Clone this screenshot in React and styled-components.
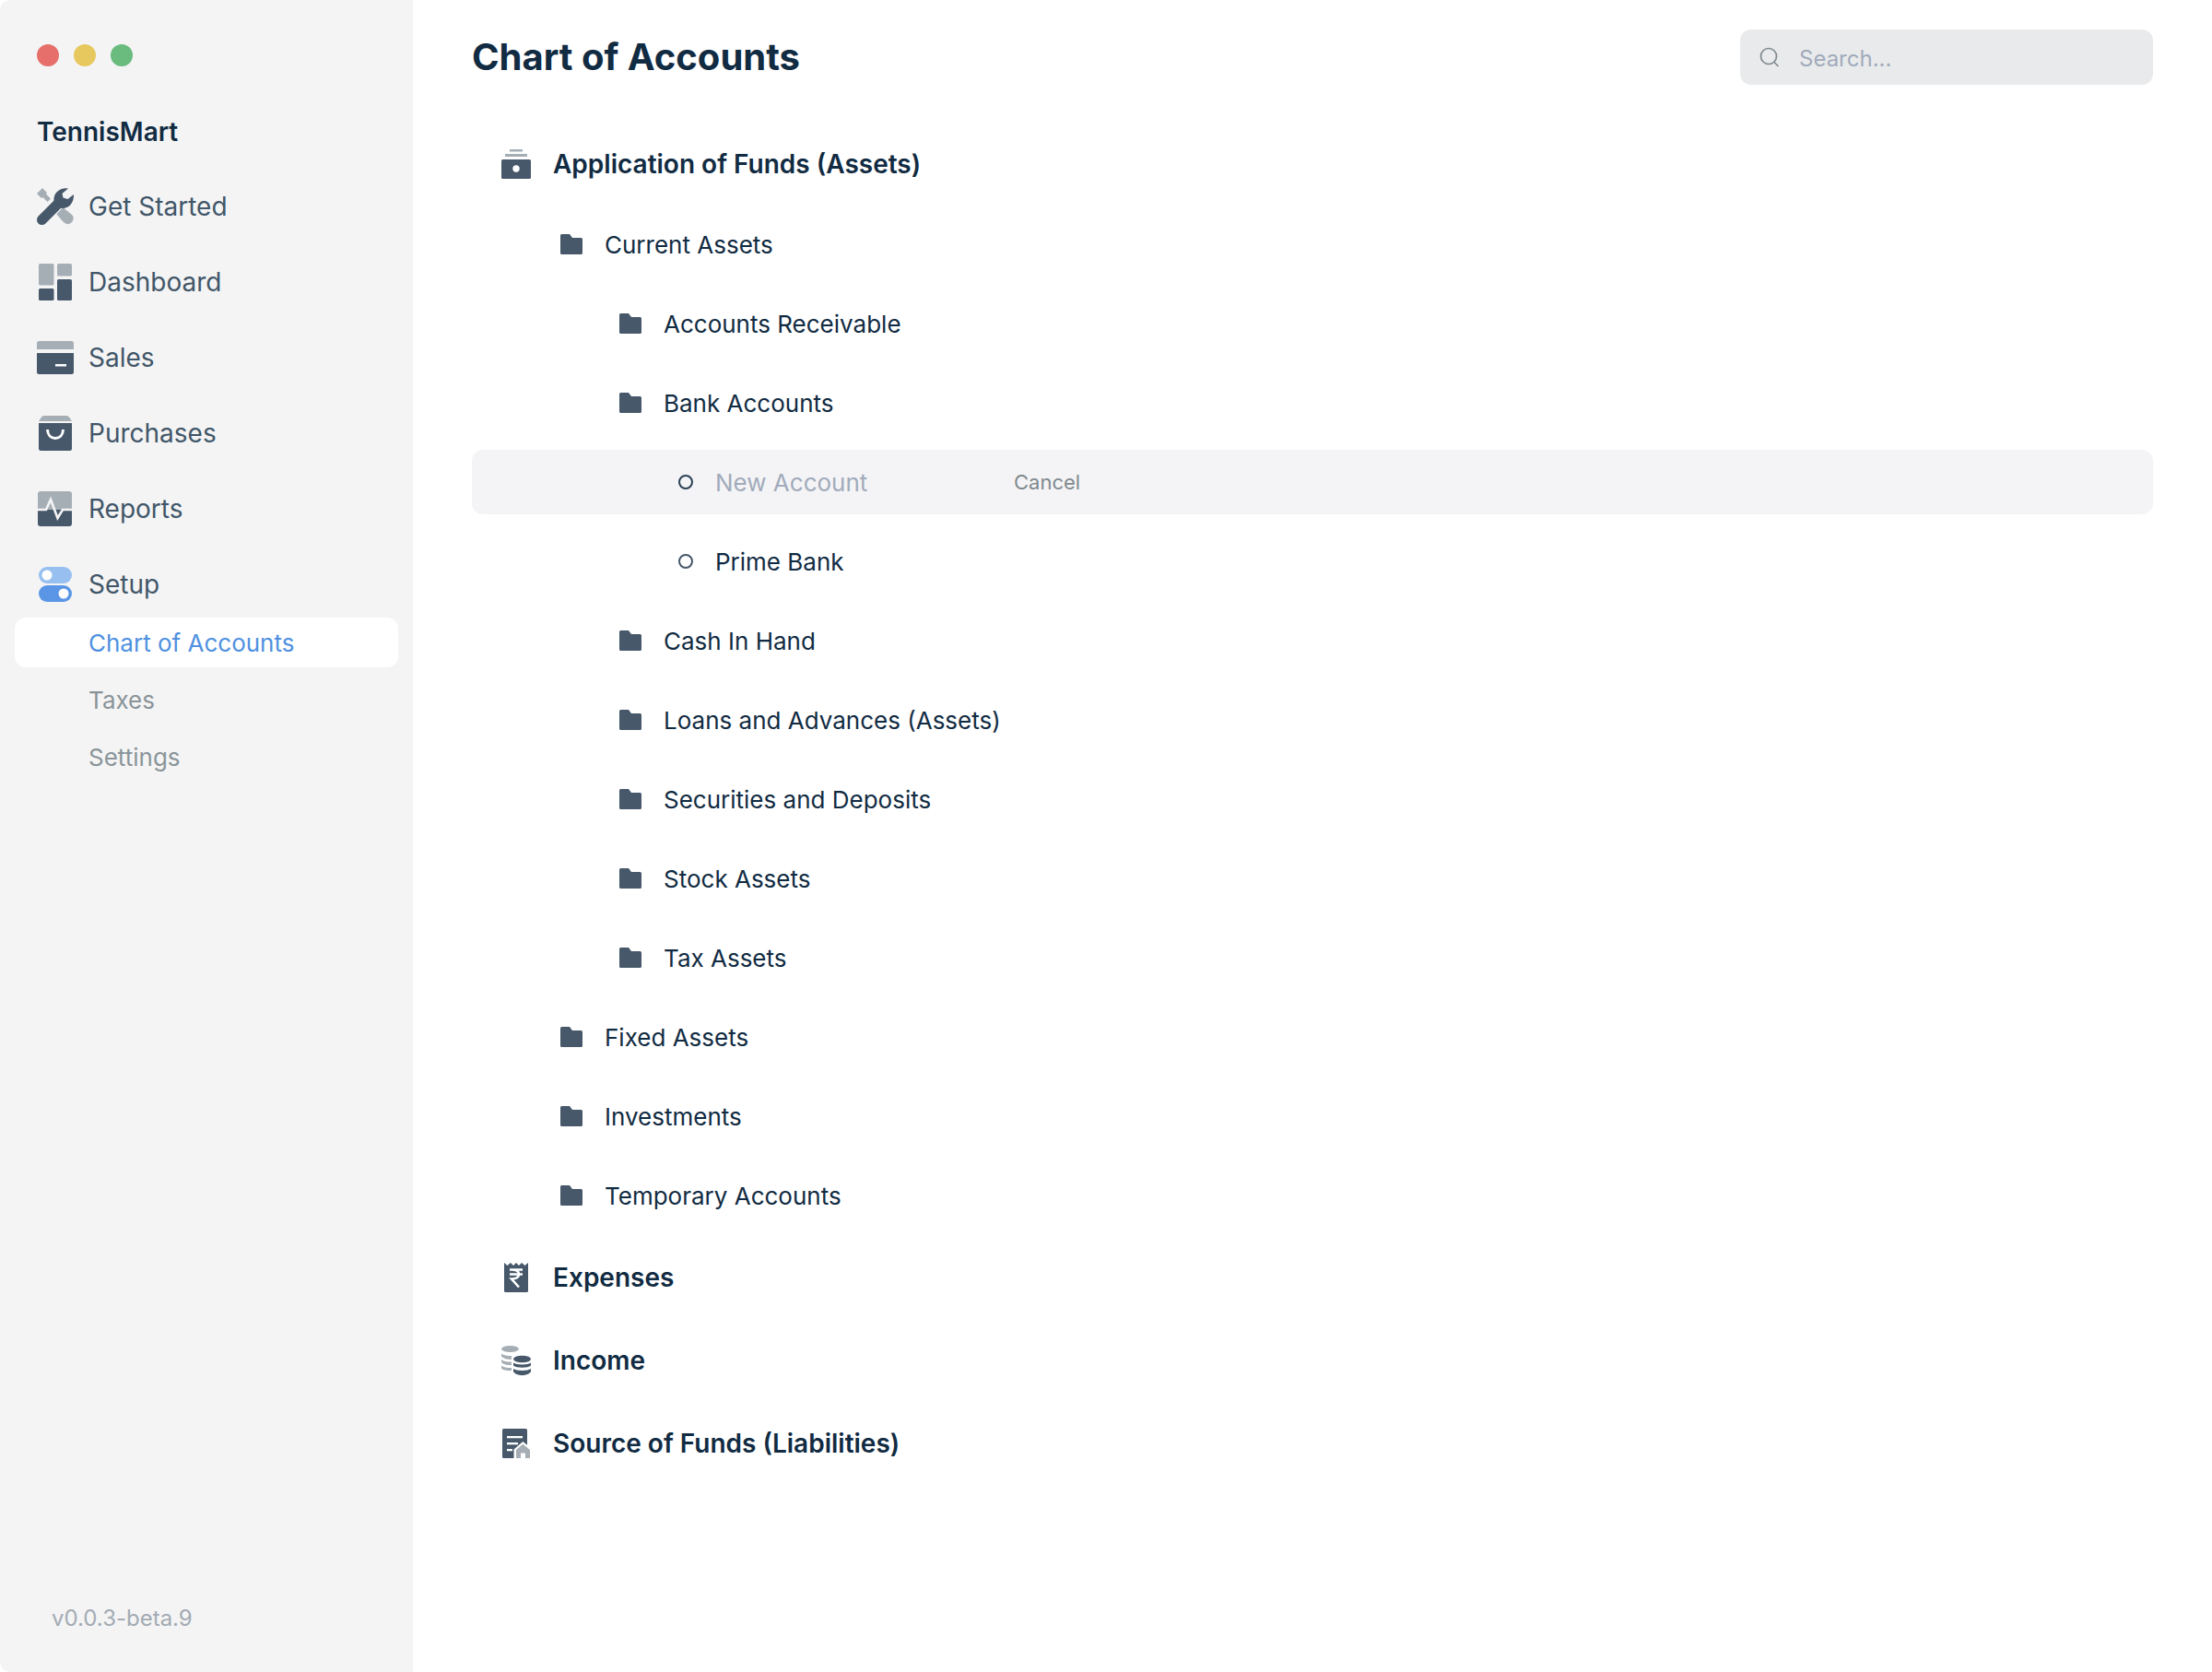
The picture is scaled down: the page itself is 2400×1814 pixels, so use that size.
import React from 'react';
import styled, { createGlobalStyle } from 'styled-components';

const Global = createGlobalStyle`
  html, body { margin: 0; padding: 0; background: #fff; }
  body { font-family: Inter, "Liberation Sans", sans-serif; -webkit-font-smoothing: antialiased; }
  * { box-sizing: border-box; }
`;

const DARK = '#46586a';
const LIGHT = '#a6aeb5';

const Shell = styled.div`
  display: flex;
  width: 2400px;
  height: 1814px;
  overflow: hidden;
  background: #fff;
`;
const Sidebar = styled.aside`
  display: flex;
  flex-direction: column;
  flex: 0 0 448px;
  height: 100%;
  padding: 48px 16px 40px;
  background: #f4f4f5;
  border-top-left-radius: 12px;
  border-bottom-left-radius: 12px;
`;
const Lights = styled.div`
  display: flex;
  gap: 16px;
  padding-left: 24px;
`;
const Light = styled.span`
  width: 24px;
  height: 24px;
  border-radius: 50%;
  background: ${p => p.$c};
`;
const Brand = styled.div`
  margin-top: 43px;
  padding-left: 24px;
  font-size: 28px;
  line-height: 56px;
  font-weight: 600;
  color: #112b42;
`;
const Nav = styled.nav`
  display: flex;
  flex-direction: column;
  gap: 22px;
  margin-top: 23px;
`;
const NavItem = styled.div`
  display: flex;
  align-items: center;
  gap: 16px;
  height: 60px;
  padding-left: 24px;
  font-size: 28px;
  color: #415668;
`;
const SubList = styled.div`
  display: flex;
  flex-direction: column;
  gap: 8px;
  margin-top: -16px;
`;
const SubItem = styled.div`
  display: flex;
  align-items: center;
  height: 54px;
  padding-left: 80px;
  border-radius: 12px;
  font-size: 26px;
  color: ${p => (p.$active ? '#4f91e0' : '#8a9499')};
  background: ${p => (p.$active ? '#fff' : 'transparent')};
`;
const Version = styled.div`
  margin-top: auto;
  padding-left: 40px;
  font-size: 24px;
  line-height: 36px;
  color: #a3abb3;
`;
const Main = styled.main`
  flex: 1;
  min-width: 0;
  padding: 32px 64px 0;
`;
const Header = styled.header`
  display: flex;
  align-items: center;
  justify-content: space-between;
  height: 60px;
`;
const Title = styled.h1`
  margin: 0;
  font-size: 40px;
  line-height: 60px;
  font-weight: 700;
  color: #112b42;
`;
const Search = styled.div`
  display: flex;
  align-items: center;
  gap: 21px;
  width: 448px;
  height: 60px;
  padding-left: 21px;
  border-radius: 12px;
  background: #e9eaec;
  font-size: 24px;
  color: #a1abbb;
`;
const SearchText = styled.span`
  padding-top: 3px;
`;
const Tree = styled.div`
  display: flex;
  flex-direction: column;
  gap: 16px;
  margin-top: 49px;
`;
const Children = styled.div`
  display: flex;
  flex-direction: column;
  gap: 16px;
  margin: -1px 0 1px;
`;
const Row = styled.div`
  display: flex;
  align-items: center;
  gap: ${p => p.$gap}px;
  height: ${p => (p.$top ? 74 : 70)}px;
  padding-left: ${p => p.$pad}px;
  border-radius: 12px;
  font-size: ${p => (p.$top ? 28 : 26)}px;
  font-weight: ${p => (p.$top ? 600 : 400)};
  color: #112b42;
  background: ${p => (p.$edit ? '#f4f4f6' : 'transparent')};
`;
const Placeholder = styled.span`
  flex: 0 0 300px;
  color: #a1abbb;
`;
const Cancel = styled.span`
  font-size: 22px;
  color: #7f8a8e;
`;
const Svg = styled.svg`
  display: block;
  flex: none;
`;

const Icon40 = ({ children }) => <Svg width="40" height="40" viewBox="0 0 40 40">{children}</Svg>;

const Wrench = () => (
  <Icon40>
    <path d="M0 6 6 0 11 5 10 6.500 15 11.500 11.500 15 6.500 10 5 11Z" fill={LIGHT} />
    <path d="M25 18.500 18.500 25 27.500 35.500C30 38.500 33.500 40.500 37 38 40.500 35 40.500 31 37.500 28.500Z" fill={LIGHT} />
    <path d="M5.500 34.500 23 17" fill="none" stroke="#f4f4f5" strokeWidth="13.500" strokeLinecap="round" />
    <path d="M5.500 34.500 23 17" fill="none" stroke={DARK} strokeWidth="11" strokeLinecap="round" />
    <path d="M34 .5C27 -1 19.500 3.500 18.500 11c-.2 1.500 0 3 .4 4.500l6 6c1.300.4 2.900.6 4.600.4 6.500-.7 11-7 10.400-15L33.500 12l-5-1.500L27.500 6Z" fill={DARK} />
  </Icon40>
);
const Dash = () => (
  <Icon40>
    <rect x="2" y="0" width="16.500" height="23.500" rx="1.500" fill={LIGHT} />
    <rect x="22" y="0" width="16" height="13.500" rx="1.500" fill={LIGHT} />
    <rect x="2" y="27" width="16.500" height="13" rx="1.500" fill={DARK} />
    <rect x="22" y="17" width="16" height="23" rx="1.500" fill={DARK} />
  </Icon40>
);
const Sales = () => (
  <Icon40>
    <path d="M0 11V4.500A2.500 2.500 0 0 1 2.500 2h35A2.500 2.500 0 0 1 40 4.500V11Z" fill={LIGHT} />
    <path d="M0 15h40v20.500a2.500 2.500 0 0 1-2.500 2.500H2.500A2.500 2.500 0 0 1 0 35.500Z" fill={DARK} />
    <rect x="20" y="27" width="12" height="2.500" fill="#fff" />
  </Icon40>
);
const Bag = () => (
  <Icon40>
    <path d="M2 7 4.500 3.200C5.500 1.800 6.500 1 8 1h24c1.500 0 2.500.8 3.500 2.200L38 7Z" fill={LIGHT} />
    <path d="M2 9h36v27.500a2.500 2.500 0 0 1-2.500 2.500h-31A2.500 2.500 0 0 1 2 36.500Z" fill={DARK} />
    <path d="M11.500 16c.2 6 3.800 9.500 8.500 9.500s8.300-3.500 8.500-9.500" fill="none" stroke="#fff" strokeWidth="3" />
  </Icon40>
);
const Pulse = () => (
  <Icon40>
    <path d="M1 21V4a3 3 0 0 1 3-3h31a3 3 0 0 1 3 3v17Z" fill={LIGHT} />
    <path d="M1 21h37v15a3 3 0 0 1-3 3H4a3 3 0 0 1-3-3Z" fill={DARK} />
    <path d="M1 21H10L15 10 22.500 30 28 21H38" fill="none" stroke="#f4f4f5" strokeWidth="2.600" />
  </Icon40>
);
const Toggle = () => (
  <Icon40>
    <rect x="2" y="1" width="36" height="18" rx="9" fill="#97c0f0" />
    <circle cx="11" cy="10" r="5.500" fill="#fff" />
    <rect x="2" y="21" width="36" height="18" rx="9" fill="#5b96e6" />
    <circle cx="29" cy="30" r="5.500" fill="#fff" />
  </Icon40>
);
const Funds = () => (
  <Icon40>
    <rect x="13" y="4" width="14" height="2.500" fill={LIGHT} />
    <rect x="8" y="9" width="24" height="3" fill={LIGHT} />
    <rect x="4" y="15" width="32" height="21" rx="1.500" fill={DARK} />
    <circle cx="20" cy="25" r="3.700" fill="#fff" />
  </Icon40>
);
const Receipt = () => (
  <Icon40>
    <path d="M7 4 10.500 7 14 4 17 7 20 4 23 7 26 4 29.500 7 33 4V34.500A1.500 1.500 0 0 1 31.500 36H8.500A1.500 1.500 0 0 1 7 34.500Z" fill={DARK} />
    <path d="M13 11.500H27M13 16.500H27M15 11.500C20 11.500 23 12.500 23 16.300 23 20 20 21.500 15 21.500L23 30.500" fill="none" stroke="#fff" strokeWidth="2.600" />
  </Icon40>
);
const Coins = () => (
  <Icon40>
    <ellipse cx="13.500" cy="7.500" rx="9.500" ry="3.500" fill={LIGHT} />
    <path d="M4 12.500C6 14.500 10 15 15 15V19C10 19 6 18 4 15.500ZM4 19C6 21 10 21.500 15 21.500V25C10 25 6 24.500 4 22ZM4 25.500C6 27.500 10 28 15 28V31C10 31 5.500 30.500 4 28.500Z" fill={LIGHT} />
    <ellipse cx="26.500" cy="18.500" rx="9.500" ry="3.800" fill={DARK} />
    <path d="M17 22.500C20 25 33 25 36 22.500V25.500C33 28.500 20 28.500 17 25.500ZM17 29C20 31.500 33 31.500 36 29V32C33 37.500 20 37.500 17 32Z" fill={DARK} />
  </Icon40>
);
const Doc = () => (
  <Icon40>
    <rect x="5" y="4" width="27" height="32" rx="1.500" fill={DARK} />
    <rect x="10" y="12" width="17" height="2.300" fill="#fff" />
    <rect x="10" y="19" width="12" height="2.300" fill="#fff" />
    <rect x="10" y="26" width="6" height="2.300" fill="#fff" />
    <path d="M27.300 18 38 26.500V38H17.500V26.500Z" fill="#fff" />
    <path d="M27.300 20.700 35 27V36H30V30.500H25V36H20V27Z" fill={LIGHT} />
  </Icon40>
);
const Folder = () => (
  <Svg width="24" height="22" viewBox="0 0 24 22">
    <path d="M0 1.500A1.500 1.500 0 0 1 1.500 0H10L13 4H22.500A1.500 1.500 0 0 1 24 5.500V20.500A1.500 1.500 0 0 1 22.500 22H1.500A1.500 1.500 0 0 1 0 20.500Z" fill={DARK} />
  </Svg>
);
const Ring = ({ c }) => (
  <Svg width="16" height="16" viewBox="0 0 16 16">
    <circle cx="8" cy="8" r="7" fill="none" stroke={c} strokeWidth="2" />
  </Svg>
);
const Glass = () => (
  <Svg width="22" height="22" viewBox="0 0 22 22">
    <circle cx="10" cy="10" r="8.500" fill="none" stroke="#7f8a8e" strokeWidth="1.700" />
    <path d="M16 16.500 20.500 21" fill="none" stroke="#7f8a8e" strokeWidth="1.700" />
  </Svg>
);

const nav = [
  ['Get Started', Wrench],
  ['Dashboard', Dash],
  ['Sales', Sales],
  ['Purchases', Bag],
  ['Reports', Pulse],
  ['Setup', Toggle],
];

const Top = ({ icon: I, label }) => <Row $top $pad={28} $gap={20}><I />{label}</Row>;
const Fold = ({ level, label }) => <Row $pad={level === 1 ? 96 : 160} $gap={24}><Folder />{label}</Row>;

export default function App() {
  return (
    <Shell>
      <Global />
      <Sidebar>
        <Lights>
          <Light $c="#e76f6b" />
          <Light $c="#e7c85e" />
          <Light $c="#69bb7e" />
        </Lights>
        <Brand>TennisMart</Brand>
        <Nav>
          {nav.map(([label, I]) => <NavItem key={label}><I />{label}</NavItem>)}
          <SubList>
            <SubItem $active>Chart of Accounts</SubItem>
            <SubItem>Taxes</SubItem>
            <SubItem>Settings</SubItem>
          </SubList>
        </Nav>
        <Version>v0.0.3-beta.9</Version>
      </Sidebar>
      <Main>
        <Header>
          <Title>Chart of Accounts</Title>
          <Search><Glass /><SearchText>Search...</SearchText></Search>
        </Header>
        <Tree>
          <Top icon={Funds} label="Application of Funds (Assets)" />
          <Children>
            <Fold level={1} label="Current Assets" />
            <Fold level={2} label="Accounts Receivable" />
            <Fold level={2} label="Bank Accounts" />
            <Row $edit $pad={224} $gap={24}>
              <Ring c="#2c4054" />
              <Placeholder>New Account</Placeholder>
              <Cancel>Cancel</Cancel>
            </Row>
            <Row $pad={224} $gap={24}><Ring c="#46586a" />Prime Bank</Row>
            <Fold level={2} label="Cash In Hand" />
            <Fold level={2} label="Loans and Advances (Assets)" />
            <Fold level={2} label="Securities and Deposits" />
            <Fold level={2} label="Stock Assets" />
            <Fold level={2} label="Tax Assets" />
            <Fold level={1} label="Fixed Assets" />
            <Fold level={1} label="Investments" />
            <Fold level={1} label="Temporary Accounts" />
          </Children>
          <Top icon={Receipt} label="Expenses" />
          <Top icon={Coins} label="Income" />
          <Top icon={Doc} label="Source of Funds (Liabilities)" />
        </Tree>
      </Main>
    </Shell>
  );
}
